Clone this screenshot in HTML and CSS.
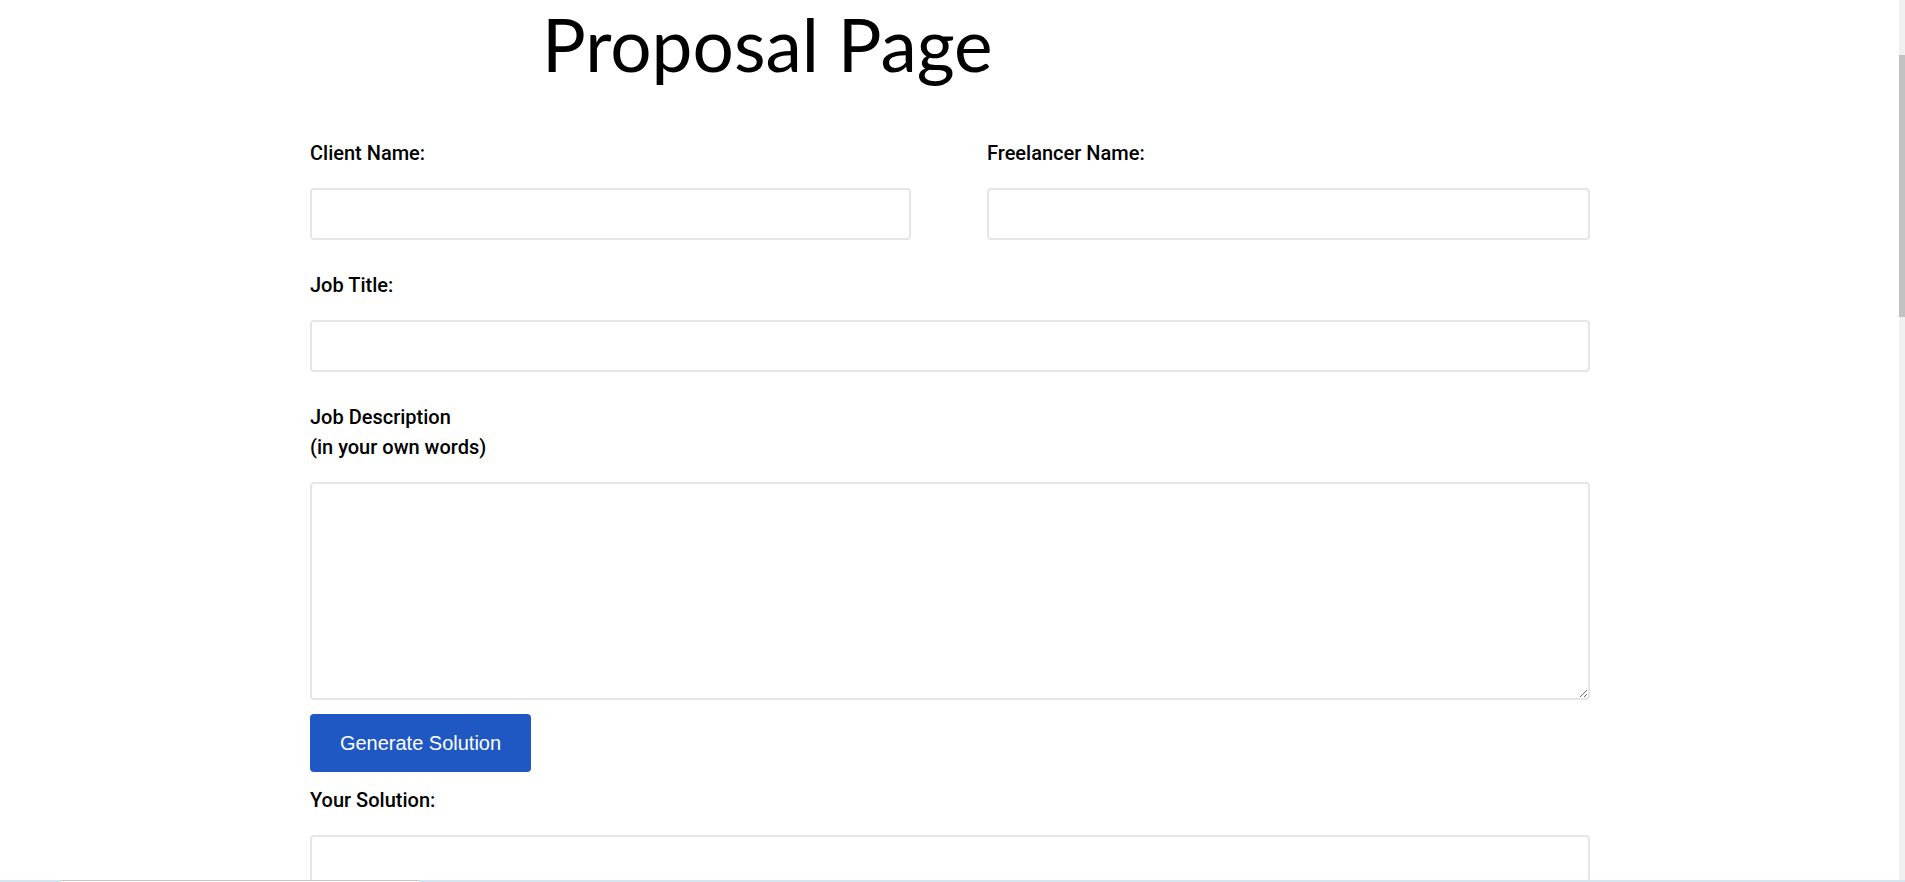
FILE: index.html
```html
<!DOCTYPE html>
<html lang="en">
<head>
<meta charset="utf-8">
<title>Proposal Page</title>
<link rel="stylesheet" href="styles.css">
</head>
<body>
<main class="page">
  <h1 class="title">Proposal Page</h1>
  <form class="form">
    <div class="row">
      <div class="field">
        <label class="label" for="client">Client Name:</label>
        <input class="input" id="client" type="text">
      </div>
      <div class="field">
        <label class="label" for="freelancer">Freelancer Name:</label>
        <input class="input" id="freelancer" type="text">
      </div>
    </div>
    <div class="field">
      <label class="label" for="job-title">Job Title:</label>
      <input class="input" id="job-title" type="text">
    </div>
    <div class="field field-tight">
      <label class="label" for="job-desc">Job Description<br>(in your own words)</label>
      <textarea class="textarea" id="job-desc"></textarea>
    </div>
    <button class="btn" type="button">Generate Solution</button>
    <div class="field">
      <label class="label" for="solution">Your Solution:</label>
      <textarea class="textarea solution" id="solution"></textarea>
    </div>
  </form>
</main>
<div class="scrollbar"><div class="thumb"></div></div>
<div class="taskstrip"><span class="strip-box"></span></div>
</body>
</html>
```

FILE: styles.css
```css
html {
  scrollbar-width: none;
}
html::-webkit-scrollbar {
  display: none;
}
body {
  margin: 0;
  background: #ffffff;
  color: #000000;
  font-family: Roboto, "Noto Sans", sans-serif;
}
.page {
  width: 1280px;
  padding-left: 310px;
}
.title {
  margin: 0 0 0 232px;
  font-family: Lato, "Open Sans", sans-serif;
  font-size: 73px;
  font-weight: 400;
  line-height: 88px;
}
.form {
  display: flex;
  flex-direction: column;
  padding-top: 50px;
}
.row {
  display: grid;
  grid-template-columns: 601px 603px;
  column-gap: 76px;
}
.field {
  display: flex;
  flex-direction: column;
  margin-bottom: 30px;
}
.field-tight {
  margin-bottom: 14px;
}
.label {
  font-size: 20px;
  font-weight: 500;
  line-height: 30px;
  margin-bottom: 20px;
}
.input,
.textarea {
  box-sizing: border-box;
  width: 100%;
  border: 2px solid #e6e6e6;
  border-radius: 4px;
  background: #ffffff;
  font-family: inherit;
  font-size: 16px;
  padding: 8px 12px;
  outline: none;
}
.input {
  height: 52px;
}
.textarea {
  height: 218px;
  resize: vertical;
  display: block;
}
.solution {
  height: 120px;
}
.btn {
  align-self: flex-start;
  box-sizing: border-box;
  width: 221px;
  height: 58px;
  margin-bottom: 13px;
  border: none;
  border-radius: 4px;
  background: #1f57c3;
  color: #ffffff;
  font-family: "Liberation Sans", Arial, sans-serif;
  font-size: 20px;
  white-space: nowrap;
  padding: 0;
  text-align: center;
}
.scrollbar {
  position: fixed;
  top: 0;
  right: 0;
  width: 6px;
  height: 100%;
  background: #f0f0f0;
}
.thumb {
  margin-top: 55px;
  height: 262px;
  background: #c2c2c2;
}
.taskstrip {
  position: fixed;
  left: 0;
  bottom: 0;
  width: 100%;
  height: 2px;
  background: #d3e6f0;
}
.strip-box {
  display: block;
  margin-left: 61px;
  width: 358px;
  height: 2px;
  background: #ffffff;
  box-shadow: inset 0 1px 0 #c6c6c6;
}
```
